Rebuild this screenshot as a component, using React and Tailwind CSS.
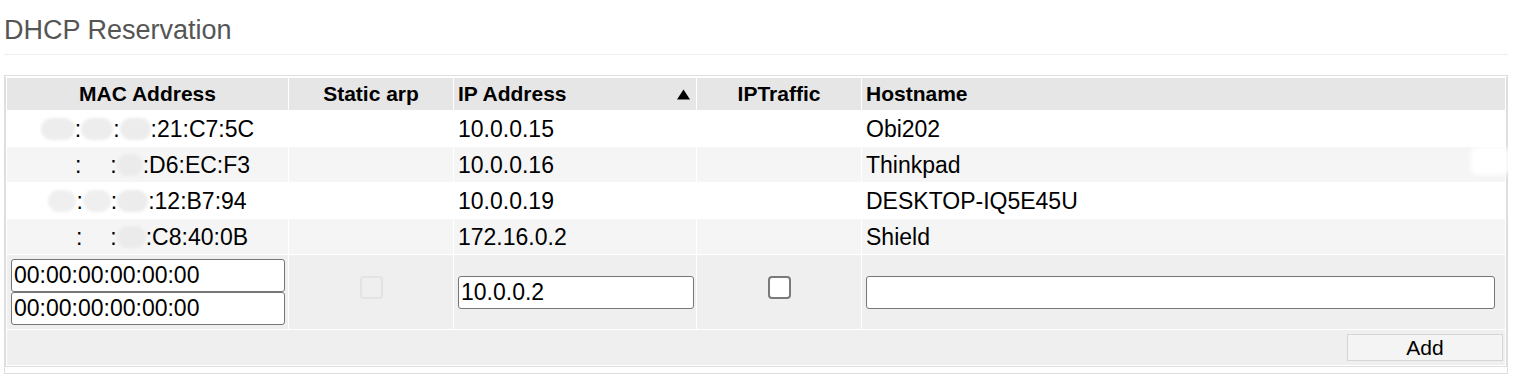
import React from "react";

const rows = [
  {
    b: ["w-[34px] bg-[#ededed]", "w-[32px] bg-[#ededed]", "w-[31px] bg-[#ececec]"],
    tail: ":21:C7:5C",
    ip: "10.0.0.15",
    host: "Obi202",
    bg: "bg-white",
  },
  {
    b: ["w-[30px]", "w-[29px]", "w-[26px] bg-[#ebebeb]"],
    tail: ":D6:EC:F3",
    ip: "10.0.0.16",
    host: "Thinkpad",
    bg: "bg-[#f5f5f5]",
    smear: true,
  },
  {
    b: ["w-[28px] bg-[#efefef]", "w-[28px] bg-[#efefef]", "w-[31px] bg-[#ececec]"],
    tail: ":12:B7:94",
    ip: "10.0.0.19",
    host: "DESKTOP-IQ5E45U",
    bg: "bg-white",
  },
  {
    b: ["w-[29px]", "w-[28px]", "w-[29px] bg-[#ebebeb]"],
    tail: ":C8:40:0B",
    ip: "172.16.0.2",
    host: "Shield",
    bg: "bg-[#f5f5f5]",
  },
];

function Mac({ b, tail }) {
  return (
    <div className="flex items-center justify-center">
      <span className={`inline-block h-[22px] rounded-[11px] blur-[1.5px] ${b[0]}`} />
      <span>:</span>
      <span className={`inline-block h-[22px] rounded-[11px] blur-[1.5px] ${b[1]}`} />
      <span>:</span>
      <span className={`inline-block h-[22px] rounded-[11px] blur-[1.5px] ${b[2]}`} />
      <span>{tail}</span>
    </div>
  );
}

export default function App() {
  return (
    <div className="w-[1515px] h-[384px] bg-white font-['Liberation_Sans',Arial,sans-serif] text-black overflow-hidden">
      <div className="ml-[4px] w-[1504px]">
        <h2 className="pt-[15px] text-[27px] leading-[31px] font-normal text-[#555]">DHCP Reservation</h2>
        <div className="mt-[8px] h-px bg-[#eee]" />
        <div className="mt-[20px] border border-[#dedede] pb-[6px]">
          <table className="mt-px w-[1502px] table-fixed border-separate border-spacing-[1px] border-x border-b border-[#dedede]">
            <colgroup>
              <col className="w-[281px]" />
              <col className="w-[164px]" />
              <col className="w-[242px]" />
              <col className="w-[164px]" />
              <col className="w-[643px]" />
            </colgroup>
            <thead>
              <tr className="h-[32px] text-[21px] leading-[24px] font-bold">
                <th className="bg-[#e6e6e6] p-0 text-center align-middle">MAC Address</th>
                <th className="bg-[#e6e6e6] p-0 text-center align-middle">Static arp</th>
                <th className="bg-[#e6e6e6] p-0 text-left align-middle">
                  <div className="flex items-center justify-between pl-[4px] pr-[6px]">
                    <span>IP Address</span>
                    <svg width="13" height="11" viewBox="0 0 13 11">
                      <polygon points="6.5,0.5 13,10.5 0,10.5" fill="#000" />
                    </svg>
                  </div>
                </th>
                <th className="bg-[#e6e6e6] p-0 text-center align-middle">IPTraffic</th>
                <th className="bg-[#e6e6e6] p-0 pl-[4px] text-left align-middle">Hostname</th>
              </tr>
            </thead>
            <tbody className="text-[23px] leading-[26px]">
              {rows.map((r, i) => (
                <tr key={i} className={`h-[35px] ${r.bg}`}>
                  <td className="p-0 align-middle">
                    <Mac b={r.b} tail={r.tail} />
                  </td>
                  <td className="p-0" />
                  <td className="p-0 pl-[4px] align-middle">{r.ip}</td>
                  <td className="p-0" />
                  <td className="relative p-0 pl-[4px] align-middle">
                    {r.host}
                    {r.smear && (
                      <div className="absolute right-[-4px] top-0 h-[28px] w-[38px] rounded-[6px] bg-white blur-[2px]" />
                    )}
                  </td>
                </tr>
              ))}
              <tr className="h-[74px] bg-[#efefef]">
                <td className="p-0 pl-[4px] align-middle">
                  <input
                    readOnly
                    value="00:00:00:00:00:00"
                    className="block h-[33px] w-[274px] rounded-[3px] border border-[#767676] bg-white px-[2px] text-[23px] leading-[26px] text-black outline-none"
                  />
                  <input
                    readOnly
                    value="00:00:00:00:00:00"
                    className="block h-[33px] w-[274px] rounded-[3px] border border-[#767676] bg-white px-[2px] text-[23px] leading-[26px] text-black outline-none"
                  />
                </td>
                <td className="p-0 pt-[21px] align-top">
                  <div className="mx-auto h-[23px] w-[23px] rounded-[4px] border-2 border-[#e3e3e3] bg-[#efefef]" />
                </td>
                <td className="p-0 pl-[4px] align-middle">
                  <input
                    readOnly
                    value="10.0.0.2"
                    className="block h-[33px] w-[236px] rounded-[3px] border border-[#767676] bg-white px-[2px] text-[23px] leading-[26px] text-black outline-none"
                  />
                </td>
                <td className="p-0 pt-[21px] align-top">
                  <div className="mx-auto h-[23px] w-[23px] rounded-[4px] border-2 border-[#7a7a7a] bg-white" />
                </td>
                <td className="p-0 pl-[4px] align-middle">
                  <input
                    readOnly
                    value=""
                    className="block h-[33px] w-[629px] rounded-[3px] border border-[#767676] bg-white px-[2px] text-[23px] leading-[26px] text-black outline-none"
                  />
                </td>
              </tr>
              <tr className="h-[35px] bg-[#efefef]">
                <td colSpan={5} className="p-0 pr-[2px] text-right align-middle">
                  <button className="inline-block h-[27px] w-[156px] border border-[#d6d6d6] bg-[#f4f4f4] text-[21px] leading-[24px] text-black">
                    Add
                  </button>
                </td>
              </tr>
            </tbody>
          </table>
        </div>
      </div>
    </div>
  );
}
